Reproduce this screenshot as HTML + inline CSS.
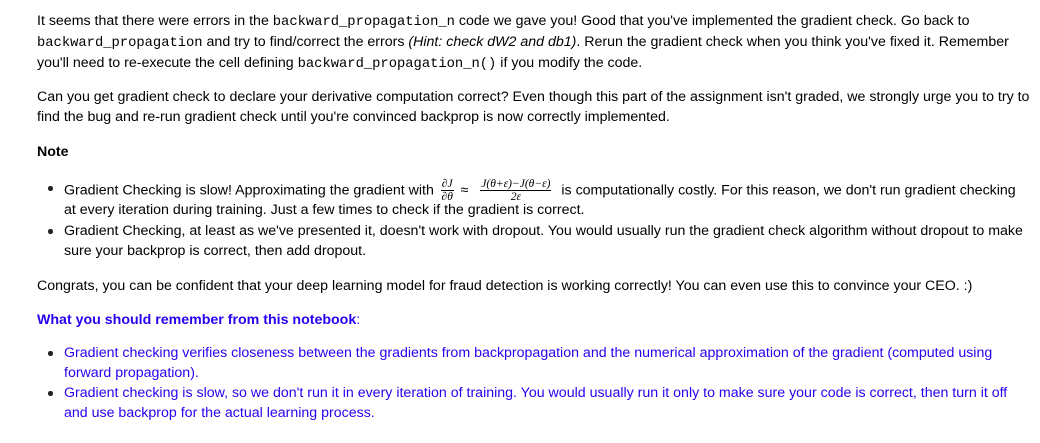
<!DOCTYPE html>
<html><head><meta charset="utf-8"><style>
html,body{margin:0;padding:0;background:#fff;}
body{width:1040px;height:443px;position:relative;overflow:hidden;font-family:"Liberation Sans",Helvetica,Arial,sans-serif;font-size:14.2px;color:#000;}
.l{position:absolute;left:37px;white-space:nowrap;line-height:20px;height:20px;}
.i{left:64px;}
code{font-family:"Liberation Mono",monospace;font-size:13.8px;}
.b{position:absolute;left:48px;width:4.5px;height:4.5px;border-radius:50%;background:#222;}
.blue{color:#2a00f0;}
.frac{display:inline-block;vertical-align:middle;text-align:center;font-family:"Liberation Serif",serif;font-style:italic;font-size:11.5px;line-height:12px;}
.frac span{display:block;}
.frac .n{border-bottom:1px solid #000;padding:0 1px;}
</style></head><body>
<div class="l" style="top:11px">It seems that there were errors in the <code>backward_propagation_n</code> code we gave you! Good that you've implemented the gradient check. Go back to</div>
<div class="l" style="top:32px"><code>backward_propagation</code> and try to find/correct the errors <i>(Hint: check dW2 and db1)</i>. Rerun the gradient check when you think you've fixed it. Remember</div>
<div class="l" style="top:53px">you'll need to re-execute the cell defining <code>backward_propagation_n()</code> if you modify the code.</div>

<div class="l" style="top:87px">Can you get gradient check to declare your derivative computation correct? Even though this part of the assignment isn't graded, we strongly urge you to try to</div>
<div class="l" style="top:107px">find the bug and re-run gradient check until you're convinced backprop is now correctly implemented.</div>

<div class="l" style="top:142px"><b>Note</b></div>

<div class="b" style="top:186px"></div>
<div class="l i" style="top:178px">Gradient Checking is slow! Approximating the gradient with <span class="frac" style="margin:0 3px"><span class="n">∂J</span><span>∂θ</span></span> ≈ <span class="frac" style="margin:0 6px 0 8px"><span class="n">J(θ+ε)−J(θ−ε)</span><span>2ε</span></span> is computationally costly. For this reason, we don't run gradient checking</div>
<div class="l i" style="top:200px">at every iteration during training. Just a few times to check if the gradient is correct.</div>
<div class="b" style="top:229px"></div>
<div class="l i" style="top:221px">Gradient Checking, at least as we've presented it, doesn't work with dropout. You would usually run the gradient check algorithm without dropout to make</div>
<div class="l i" style="top:241px">sure your backprop is correct, then add dropout.</div>

<div class="l" style="top:276px">Congrats, you can be confident that your deep learning model for fraud detection is working correctly! You can even use this to convince your CEO. :)</div>

<div class="l blue" style="top:310px"><b>What you should remember from this notebook</b>:</div>

<div class="b" style="top:351px"></div>
<div class="l i blue" style="top:343px">Gradient checking verifies closeness between the gradients from backpropagation and the numerical approximation of the gradient (computed using</div>
<div class="l i blue" style="top:363px">forward propagation).</div>
<div class="b" style="top:391px"></div>
<div class="l i blue" style="top:383px">Gradient checking is slow, so we don't run it in every iteration of training. You would usually run it only to make sure your code is correct, then turn it off</div>
<div class="l i blue" style="top:403px">and use backprop for the actual learning process.</div>
</body></html>
